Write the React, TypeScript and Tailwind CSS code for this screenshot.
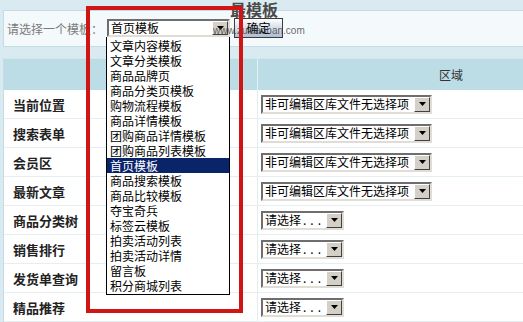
import React from "react";

const listItems = [
  "文章内容模板",
  "文章分类模板",
  "商品品牌页",
  "商品分类页模板",
  "购物流程模板",
  "商品详情模板",
  "团购商品详情模板",
  "团购商品列表模板",
  "首页模板",
  "商品搜索模板",
  "商品比较模板",
  "夺宝奇兵",
  "标签云模板",
  "拍卖活动列表",
  "拍卖活动详情",
  "留言板",
  "积分商城列表",
];

const rows: { label: string; wide: boolean }[] = [
  { label: "当前位置", wide: true },
  { label: "搜索表单", wide: true },
  { label: "会员区", wide: true },
  { label: "最新文章", wide: true },
  { label: "商品分类树", wide: false },
  { label: "销售排行", wide: false },
  { label: "发货单查询", wide: false },
  { label: "精品推荐", wide: false },
];

function Arrow() {
  return (
    <div className="flex h-full w-[16px] shrink-0 items-center justify-center border border-t-white border-l-white border-r-[#404040] border-b-[#404040] bg-[#d4d0c8]">
      <svg width="7" height="4" viewBox="0 0 7 4">
        <path d="M0 0 H7 L3.5 4 Z" fill="#000" />
      </svg>
    </div>
  );
}

function FakeSelect({ children, className }: { children: React.ReactNode; className: string }) {
  return (
    <div
      className={
        "flex items-stretch border-2 border-t-[#6e6e6e] border-l-[#6e6e6e] border-b-[#e0ddd6] border-r-[#e0ddd6] bg-white " +
        className
      }
    >
      <div className="flex min-w-0 flex-1 items-center whitespace-nowrap pl-[2px] text-[12px] leading-[14px] text-black">
        {children}
      </div>
      <Arrow />
    </div>
  );
}

export default function App() {
  return (
    <div className="relative h-[322px] w-[523px] overflow-hidden bg-[#d9eaf0] font-['Noto_Sans_CJK_SC',sans-serif]">
      {/* top bar */}
      <div className="pl-[3px] pt-[10px]">
        <div className="flex h-[37px] items-center border-y border-l border-[#c4dce5] bg-[#f4f9fb] pl-[3px]">
          <div className="w-[100px] whitespace-nowrap text-[12px] leading-none text-[#7b7b7b]">请选择一个模板：</div>
          <FakeSelect className="mt-[-1px] h-[18px] w-[123px]">首页模板</FakeSelect>
          <div className="ml-[4px] mt-[-2px] flex h-[20px] w-[49px] items-center justify-center border border-[#3c3c3c] bg-gradient-to-b from-white to-[#aebcd4] text-[12px] leading-none text-black">
            确定
          </div>
        </div>
      </div>

      {/* table */}
      <div className="ml-[3px] mt-[11px] border-l border-[#c4dce5]">
        <div className="flex h-[32px] border-t border-[#d3e7ee] bg-[#bddde6]">
          <div className="w-[254px] border-r border-[#e3f0f4]" />
          <div className="flex flex-1 items-center pl-[181px] text-[12px] leading-none text-[#333]">区域</div>
        </div>
        {rows.map((r) => (
          <div key={r.label} className="flex h-[29px] border-b border-[#e5eef1] bg-white">
            <div className="flex w-[254px] items-center border-r border-[#e3ecef] pl-[9px] text-[13px] font-bold leading-none text-[#222]">
              {r.label}
            </div>
            <div className="flex flex-1 items-center pl-[3px]">
              {r.wide ? (
                <FakeSelect className="h-[19px] w-[171px]">非可编辑区库文件无选择项</FakeSelect>
              ) : (
                <FakeSelect className="h-[19px] w-[83px]">
                  请选择<span className="pl-[2px] tracking-[4px]">...</span>
                </FakeSelect>
              )}
            </div>
          </div>
        ))}
      </div>

      {/* title partly hidden */}
      <div className="absolute left-[230px] top-[3px] whitespace-nowrap text-[16px] font-bold leading-none text-[#4a4a4a] font-['Liberation_Serif','Noto_Sans_CJK_SC',serif]">
        最模板
      </div>

      {/* dropdown list */}
      <div className="absolute left-[106px] top-[37px] w-[124px] border border-t-0 border-black bg-white pb-[1px] pt-[1px]">
        {listItems.map((t) => (
          <div
            key={t}
            className={
              "h-[15px] whitespace-nowrap pl-[3px] text-[12px] leading-[15px] " +
              (t === "首页模板" ? "bg-[#0a246a] text-white" : "text-black")
            }
          >
            {t}
          </div>
        ))}
      </div>

      {/* watermark */}
      <div className="pointer-events-none absolute left-[213px] top-[26px] whitespace-nowrap text-[10px] leading-none text-[#3f3f3f]/80 font-['Liberation_Sans',sans-serif]">
        www.zuidaoban.com
      </div>

      {/* red highlight frame */}
      <div className="absolute left-[86px] top-[6px] h-[307px] w-[157px] border-[4px] border-[#d01515]" />
    </div>
  );
}
